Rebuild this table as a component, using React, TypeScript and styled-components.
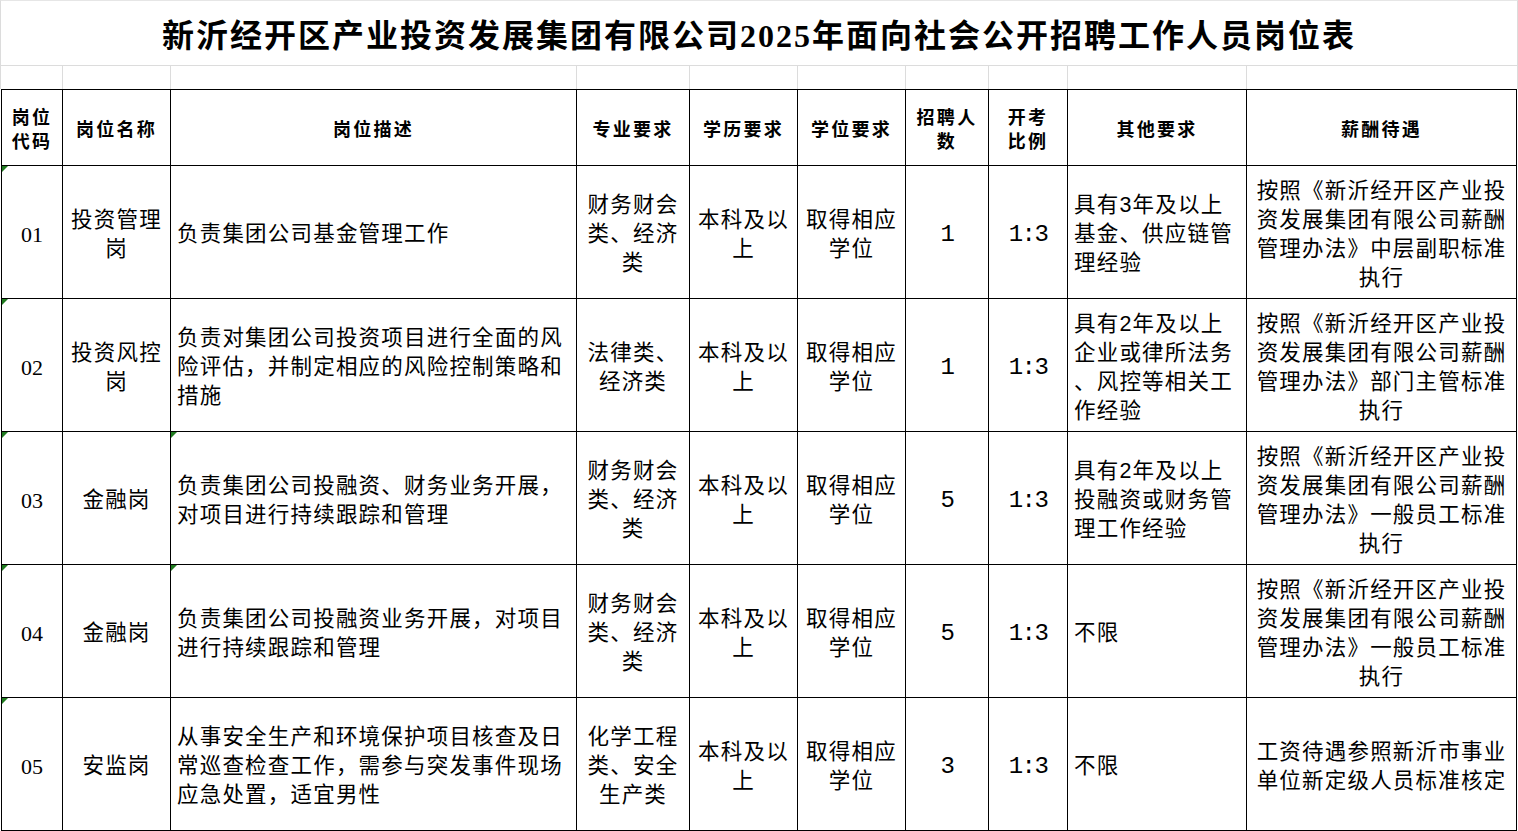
import React from "react";
import styled, { createGlobalStyle } from "styled-components";

const GlobalStyle = createGlobalStyle`
  html, body { margin: 0; padding: 0; background: #ffffff; }
  body {
    font-family: "Liberation Sans", "Noto Sans CJK SC", sans-serif;
    color: #000000;
  }
`;

const COLS = [61, 108, 406, 113, 108, 108, 83, 79, 179, 270];
const GUTTER = [62, 108, 406, 113, 108, 108, 83, 79, 179, 271];
const GRID = "#dcdcdc";

const Sheet = styled.div`
  width: 1518px;
  overflow: hidden;
`;

const TitleBar = styled.div`
  box-sizing: border-box;
  height: 66px;
  width: 1518px;
  border: 1px solid ${GRID};
  border-top-color: #e6e6e6;
  display: flex;
  align-items: center;
  justify-content: center;
  padding-top: 5px;
  font-family: "Liberation Serif", "Noto Sans CJK SC", serif;
  font-weight: 700;
  font-size: 32px;
  letter-spacing: 2px;
  line-height: 1;
`;

const GutterRow = styled.div`
  display: grid;
  grid-template-columns: ${GUTTER.map((w) => `${w}px`).join(" ")};
  height: 23px;
  border-left: 1px solid ${GRID};
  box-sizing: border-box;
`;

const GutterCell = styled.div`
  border-right: 1px solid ${GRID};
`;

const Table = styled.table`
  border-collapse: collapse;
  table-layout: fixed;
  width: 1516px;
  margin-left: 1px;
`;

const Col = styled.col<{ $w: number }>`
  width: ${(p) => p.$w}px;
`;

const HeadRow = styled.tr`
  height: 76px;
`;

const BodyRow = styled.tr`
  height: 133px;
`;

const HeadCell = styled.th`
  border: 1px solid #000;
  padding: 0 2px;
  font-family: "Noto Sans CJK SC", sans-serif;
  font-weight: 700;
  font-size: 18px;
  letter-spacing: 2.3px;
  line-height: 24px;
  text-align: center;
  vertical-align: middle;
  white-space: nowrap;
`;

type Kind = "code" | "num" | "text";

const BodyCell = styled.td<{ $align: "left" | "center"; $kind: Kind }>`
  position: relative;
  border: 1px solid #000;
  padding: ${(p) => (p.$align === "left" ? "5px 4px 0 6px" : "5px 2px 0")};
  text-align: ${(p) => p.$align};
  vertical-align: middle;
  white-space: nowrap;
  line-height: 29px;
  font-weight: 400;
  font-family: ${(p) =>
    p.$kind === "code"
      ? `"Liberation Serif", serif`
      : p.$kind === "num"
      ? `"Liberation Mono", monospace`
      : `"Liberation Sans", "Noto Sans CJK SC", sans-serif`};
  font-size: ${(p) =>
    p.$kind === "code" ? "22px" : p.$kind === "text" ? "21.5px" : "24px"};
  letter-spacing: ${(p) =>
    p.$kind === "text" ? "1.2px" : p.$kind === "num" ? "-1.5px" : "0"};
`;

const Marker = styled.span`
  position: absolute;
  left: 0;
  top: 0;
  width: 0;
  height: 0;
  border-top: 6px solid #1f7a1f;
  border-right: 6px solid transparent;
`;

const Lines: React.FC<{ lines: string[] }> = ({ lines }) => (
  <>
    {lines.map((l, i) => (
      <React.Fragment key={i}>
        {i > 0 && <br />}
        {l}
      </React.Fragment>
    ))}
  </>
);

const headers: string[][] = [
  ["岗位", "代码"],
  ["岗位名称"],
  ["岗位描述"],
  ["专业要求"],
  ["学历要求"],
  ["学位要求"],
  ["招聘人", "数"],
  ["开考", "比例"],
  ["其他要求"],
  ["薪酬待遇"],
];

type Row = {
  code: string;
  name: string[];
  desc: string[];
  major: string[];
  count: string;
  other: string[];
  pay: string[];
  descMark?: boolean;
};

const payLines = (level: string) => [
  "按照《新沂经开区产业投",
  "资发展集团有限公司薪酬",
  `管理办法》${level}标准`,
  "执行",
];

const rows: Row[] = [
  {
    code: "01",
    name: ["投资管理", "岗"],
    desc: ["负责集团公司基金管理工作"],
    major: ["财务财会", "类、经济", "类"],
    count: "1",
    other: ["具有3年及以上", "基金、供应链管", "理经验"],
    pay: payLines("中层副职"),
  },
  {
    code: "02",
    name: ["投资风控", "岗"],
    desc: [
      "负责对集团公司投资项目进行全面的风",
      "险评估，并制定相应的风险控制策略和",
      "措施",
    ],
    major: ["法律类、", "经济类"],
    count: "1",
    other: ["具有2年及以上", "企业或律所法务", "、风控等相关工", "作经验"],
    pay: payLines("部门主管"),
  },
  {
    code: "03",
    name: ["金融岗"],
    desc: ["负责集团公司投融资、财务业务开展，", "对项目进行持续跟踪和管理"],
    major: ["财务财会", "类、经济", "类"],
    count: "5",
    other: ["具有2年及以上", "投融资或财务管", "理工作经验"],
    pay: payLines("一般员工"),
    descMark: true,
  },
  {
    code: "04",
    name: ["金融岗"],
    desc: ["负责集团公司投融资业务开展，对项目", "进行持续跟踪和管理"],
    major: ["财务财会", "类、经济", "类"],
    count: "5",
    other: ["不限"],
    pay: payLines("一般员工"),
    descMark: true,
  },
  {
    code: "05",
    name: ["安监岗"],
    desc: [
      "从事安全生产和环境保护项目核查及日",
      "常巡查检查工作，需参与突发事件现场",
      "应急处置，适宜男性",
    ],
    major: ["化学工程", "类、安全", "生产类"],
    count: "3",
    other: ["不限"],
    pay: ["工资待遇参照新沂市事业", "单位新定级人员标准核定"],
  },
];

export default function App() {
  return (
    <>
      <GlobalStyle />
      <Sheet>
        <TitleBar>新沂经开区产业投资发展集团有限公司2025年面向社会公开招聘工作人员岗位表</TitleBar>
        <GutterRow>
          {GUTTER.map((_, i) => (
            <GutterCell key={i} />
          ))}
        </GutterRow>
        <Table>
          <colgroup>
            {COLS.map((w, i) => (
              <Col key={i} $w={w} />
            ))}
          </colgroup>
          <thead>
            <HeadRow>
              {headers.map((h, i) => (
                <HeadCell key={i}>
                  <Lines lines={h} />
                </HeadCell>
              ))}
            </HeadRow>
          </thead>
          <tbody>
            {rows.map((r) => (
              <BodyRow key={r.code}>
                <BodyCell $align="center" $kind="code">
                  <Marker />
                  {r.code}
                </BodyCell>
                <BodyCell $align="center" $kind="text">
                  <Lines lines={r.name} />
                </BodyCell>
                <BodyCell $align="left" $kind="text">
                  {r.descMark && <Marker />}
                  <Lines lines={r.desc} />
                </BodyCell>
                <BodyCell $align="center" $kind="text">
                  <Lines lines={r.major} />
                </BodyCell>
                <BodyCell $align="center" $kind="text">
                  <Lines lines={["本科及以", "上"]} />
                </BodyCell>
                <BodyCell $align="center" $kind="text">
                  <Lines lines={["取得相应", "学位"]} />
                </BodyCell>
                <BodyCell $align="center" $kind="num">
                  {r.count}
                </BodyCell>
                <BodyCell $align="center" $kind="num">
                  1:3
                </BodyCell>
                <BodyCell $align="left" $kind="text">
                  <Lines lines={r.other} />
                </BodyCell>
                <BodyCell $align="center" $kind="text">
                  <Lines lines={r.pay} />
                </BodyCell>
              </BodyRow>
            ))}
          </tbody>
        </Table>
      </Sheet>
    </>
  );
}
